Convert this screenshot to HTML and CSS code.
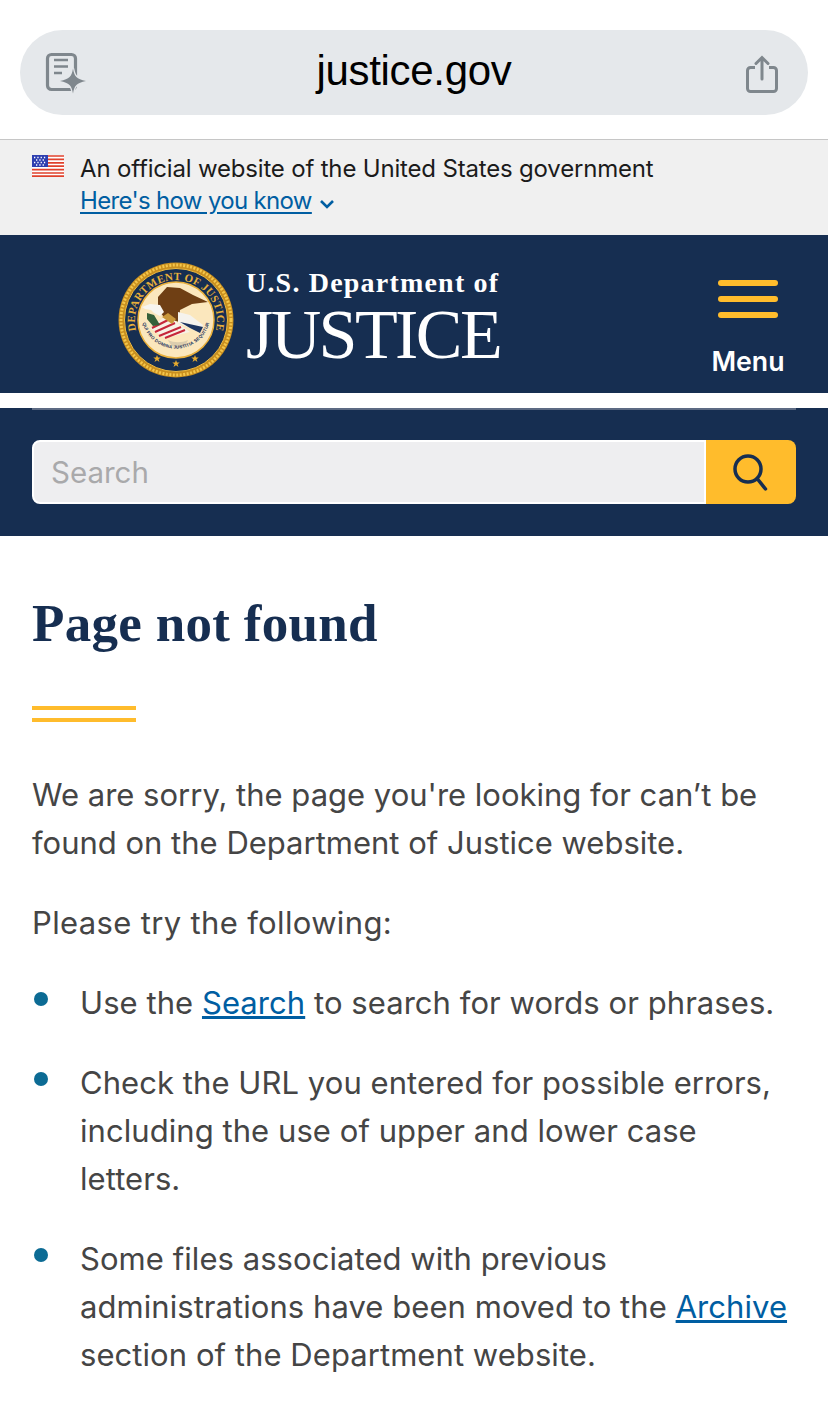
FILE: index.html
```html
<!DOCTYPE html>
<html lang="en">
<head>
<meta charset="utf-8">
<title>Page not found</title>
<link rel="stylesheet" href="styles.css">
</head>
<body>
<div class="browser">
  <div class="pill">
    <svg class="reader" width="42" height="44" viewBox="0 0 42 44">
      <rect x="2.500" y="3.500" width="28" height="35" rx="4" fill="none" stroke="#7f878d" stroke-width="3.200"/>
      <path d="M9 9h14M9 15.500h14M9 22h8" stroke="#7f878d" stroke-width="2.500" fill="none"/>
      <path d="M28 17.500c1.300 8 3.500 10.500 13 12.500-9.500 2-11.700 4.500-13 12.500-1.300-8-3.500-10.500-13-12.500 9.500-2 11.700-4.500 13-12.500z" fill="#7f878d" stroke="#e5e8eb" stroke-width="2.500" paint-order="stroke"/>
    </svg>
    <span class="url">justice.gov</span>
    <svg class="share" width="34" height="40" viewBox="0 0 34 40">
      <path d="M10 13.500H5.500A3 3 0 0 0 2.500 16.500v18a3 3 0 0 0 3 3h23a3 3 0 0 0 3-3v-18a3 3 0 0 0-3-3H24" fill="none" stroke="#7f878d" stroke-width="3"/>
      <path d="M17 25V4M11 9.500l6-6 6 6" fill="none" stroke="#7f878d" stroke-width="3" stroke-linecap="round"/>
    </svg>
  </div>
</div>

<section class="gov">
  <svg class="flag" width="32" height="22" viewBox="0 0 32 22">
    <rect width="32" height="22" fill="#fff"/>
    <path d="M0 1h32M0 4.400h32M0 7.800h32M0 11.200h32M0 14.600h32M0 18h32M0 21.200h32" stroke="#e0412c" stroke-width="1.700"/>
    <rect width="16" height="12" fill="#2e3fb0"/>
    <path d="M2 2.500h12M4 5h9M2 7.500h12M4 10h9" stroke="#fff" stroke-width="1.300" stroke-dasharray="1.300 2"/>
  </svg>
  <div class="gov-text">
    <p class="gov-line">An official website of the United States government</p>
    <p class="gov-line"><a class="gov-link" href="#">Here's how you know</a>
      <svg class="chev" width="16" height="10" viewBox="0 0 16 10"><path d="M2 2l6 6 6-6" fill="none" stroke="#005ea2" stroke-width="2.600"/></svg>
    </p>
  </div>
</section>

<header class="masthead">
  <div class="brand">
    <svg class="seal" width="116" height="116" viewBox="0 0 116 116">
      <defs>
        <path id="top-arc" d="M18 68A41 41 0 1 1 98 68"/>
        <path id="bot-arc" d="M24 58A34.500 34.500 0 0 0 92 58"/>
      </defs>
      <circle cx="58" cy="58" r="57.500" fill="#c98f1f"/>
      <circle cx="58" cy="58" r="55" fill="none" stroke="#f4c64b" stroke-width="3" stroke-dasharray="2 1.500"/>
      <circle cx="58" cy="58" r="51.500" fill="#162e51" stroke="#f0bb3e" stroke-width="1"/>
      <circle cx="58" cy="58" r="38" fill="#fbe7bd" stroke="#e9b03c" stroke-width="1.500"/>
      <text class="seal-top"><textPath href="#top-arc" startOffset="50%" text-anchor="middle">DEPARTMENT OF JUSTICE</textPath></text>
      <path d="M40 35l9-10 13 1 13 7 15 7-16 2-12 6-1 12-15-5-6-7z" fill="#6f3f14"/>
      <path d="M24 45l8-3 10 1 4 7-4 4-6-3-3-3-6-1z" fill="#f7f5ef"/>
      <path d="M60 50l12 3 13 10-3 8-10-5-12-5z" fill="#f5f3ed"/>
      <path d="M62 60l23 5-3 6-10-5z" fill="#1c3560"/>
      <path d="M32 66l17-13 23 17-25 6z" fill="#f7f1e6"/>
      <path d="M34 66l18-9M37 70l20-9M41 74l22-9M47 76l20-8" stroke="#c6263a" stroke-width="2"/>
      <path d="M29 51l7 2 6 10-7 1-6-7z" fill="#35603a"/>
      <path d="M44 55l6-4 8 6-4 5z" fill="#c9973a"/>
      <path d="M50 78c6 3 14 3 20 0-2 6-6 8-10 8s-8-3-10-8z" fill="#dccdae"/>
      <text class="seal-bottom"><textPath href="#bot-arc" startOffset="50%" text-anchor="middle">QUI PRO DOMINA JUSTITIA SEQUITUR</textPath></text>
      <path d="M39 93l1 2.500 2.700 0-2.200 1.700 1 2.800-2.500-1.700-2.500 1.700 1-2.800-2.200-1.700 2.700 0z M58 98l1 2.500 2.700 0-2.200 1.700 1 2.800-2.500-1.700-2.500 1.700 1-2.800-2.200-1.700 2.700 0z M77 93l1 2.500 2.700 0-2.200 1.700 1 2.800-2.500-1.700-2.500 1.700 1-2.800-2.200-1.700 2.700 0z" fill="#e8ac2e"/>
    </svg>
    <div class="wordmark">
      <div class="word-small">U.S. Department of</div>
      <div class="word-big">JUSTICE</div>
    </div>
  </div>
  <button class="menu" type="button">
    <span class="bar"></span><span class="bar"></span><span class="bar"></span>
    <span class="menu-label">Menu</span>
  </button>
</header>

<section class="search-band">
  <div class="search-inner">
    <form class="search">
      <div class="search-input">Search</div>
      <div class="search-btn">
        <svg width="36" height="40" viewBox="0 0 36 40"><circle cx="15" cy="15" r="13" fill="none" stroke="#162e51" stroke-width="3.500"/><path d="M24.500 25l8 10" stroke="#162e51" stroke-width="3.500" stroke-linecap="round"/></svg>
      </div>
    </form>
  </div>
</section>

<main class="main">
  <h1 class="title">Page not found</h1>
  <div class="rule"></div>
  <p class="para para-first">We are sorry, the page you're looking for can’t be found on the Department of Justice website.</p>
  <p class="para para-try">Please try the following:</p>
  <ul class="list">
    <li class="item">Use the <a href="#" class="link">Search</a> to search for words or phrases.</li>
    <li class="item">Check the URL you entered for possible errors, including the use of upper and lower case letters.</li>
    <li class="item">Some files associated with previous administrations have been moved to the <a href="#" class="link">Archive</a> section of the Department website.</li>
  </ul>
</main>
</body>
</html>
```

FILE: styles.css
```css
* { box-sizing: border-box; }
html, body { margin: 0; padding: 0; }
body {
  width: 828px;
  height: 1410px;
  overflow: hidden;
  background: #fff;
  font-family: "Inter", "Liberation Sans", sans-serif;
  color: #454545;
}
p { margin: 0; }

.browser { height: 139px; padding: 30px 20px 0; background: #fff; }
.pill {
  height: 85px;
  border-radius: 43px;
  background: #e5e8eb;
  display: flex;
  align-items: center;
  justify-content: space-between;
  padding: 0 29px 0 25px;
  position: relative;
}
.url {
  position: absolute;
  left: 0; right: 0;
  top: 16px;
  text-align: center;
  font-family: "Liberation Sans", sans-serif;
  font-size: 42px;
  line-height: 50px;
  color: #000;
  letter-spacing: -0.3px;
}
.share { margin-top: 3px; }

.gov {
  height: 96px;
  background: #f0f0f0;
  border-top: 1px solid #c6c6c6;
  padding: 13px 32px 0 32px;
  display: flex;
  gap: 16px;
}
.flag { flex: none; margin-top: 2px; }
.gov-line { font-size: 24px; line-height: 32px; color: #1b1b1b; letter-spacing: -0.18px; white-space: nowrap; }
.gov-link { color: #005ea2; letter-spacing: -0.67px; text-underline-offset: 3px; }
.chev { margin-left: 1px; }

.masthead {
  height: 158px;
  background: #162e51;
  display: flex;
  justify-content: space-between;
  padding: 27px 50px 0 118px;
}
.brand { display: flex; gap: 12px; height: 116px; }
.wordmark { color: #fff; font-family: "Liberation Serif", serif; }
.word-small { font-size: 28px; font-weight: 700; line-height: 30px; margin-top: 6px; letter-spacing: 1.2px; white-space: nowrap; }
.word-big { font-size: 70px; line-height: 70px; margin-top: 2px; letter-spacing: -2.6px; }
.seal-top { font: 700 11px "Liberation Serif", serif; fill: #e8b03a; letter-spacing: 0.2px; }
.seal-bottom { font: 700 4.500px "Liberation Sans", sans-serif; fill: #1c3560; letter-spacing: 0.2px; }

.menu {
  width: 60px;
  padding: 18px 0 0;
  border: 0;
  background: none;
  display: flex;
  flex-direction: column;
  align-items: center;
  gap: 10px;
  height: 131px;
}
.bar { display: block; flex: none; width: 60px; height: 6px; border-radius: 3px; background: #ffbc2c; }
.menu-label {
  margin-top: 17px;
  color: #fff;
  font: 600 26.700px/32px "Inter", sans-serif;
  white-space: nowrap;
}

.search-band { margin-top: 15px; height: 128px; background: #162e51; padding: 0 32px; }
.search-inner { border-top: 2px solid #5c6a83; padding-top: 30px; }
.search { display: flex; height: 64px; }
.search-input {
  flex: 1;
  background: #eeeef0;
  border: 2px solid #fff;
  border-radius: 8px 0 0 8px;
  color: #a9a9ab;
  font-size: 29.500px;
  line-height: 60px;
  padding-left: 17px;
}
.search-btn {
  width: 90px;
  background: #ffbc2c;
  border-radius: 0 8px 8px 0;
  display: flex;
  align-items: center;
  justify-content: center;
  padding-top: 4px;
}

.main { padding: 56px 32px 0; }
.title {
  margin: 0;
  font-family: "Liberation Serif", serif;
  font-size: 53px;
  font-weight: 700;
  line-height: 62px;
  color: #162e51;
  letter-spacing: 0.3px;
}
.rule {
  width: 104px;
  height: 16px;
  margin-top: 52px;
  border-top: 4px solid #ffbc2c;
  border-bottom: 4px solid #ffbc2c;
}
.para { font-size: 31px; line-height: 48px; margin-top: 32px; letter-spacing: 0; }
.para-first { margin-top: 49px; }
.para-try { letter-spacing: 0.35px; }
.list { list-style: none; margin: 32px 0 0; padding: 0 0 0 48px; }
.item { font-size: 31px; line-height: 48px; margin-bottom: 32px; position: relative; letter-spacing: 0.06px; }
.item::before {
  content: "";
  position: absolute;
  left: -46px;
  top: 13px;
  width: 14px;
  height: 14px;
  border-radius: 50%;
  background: #0c6b94;
}
.link { color: #005ea2; }
```
